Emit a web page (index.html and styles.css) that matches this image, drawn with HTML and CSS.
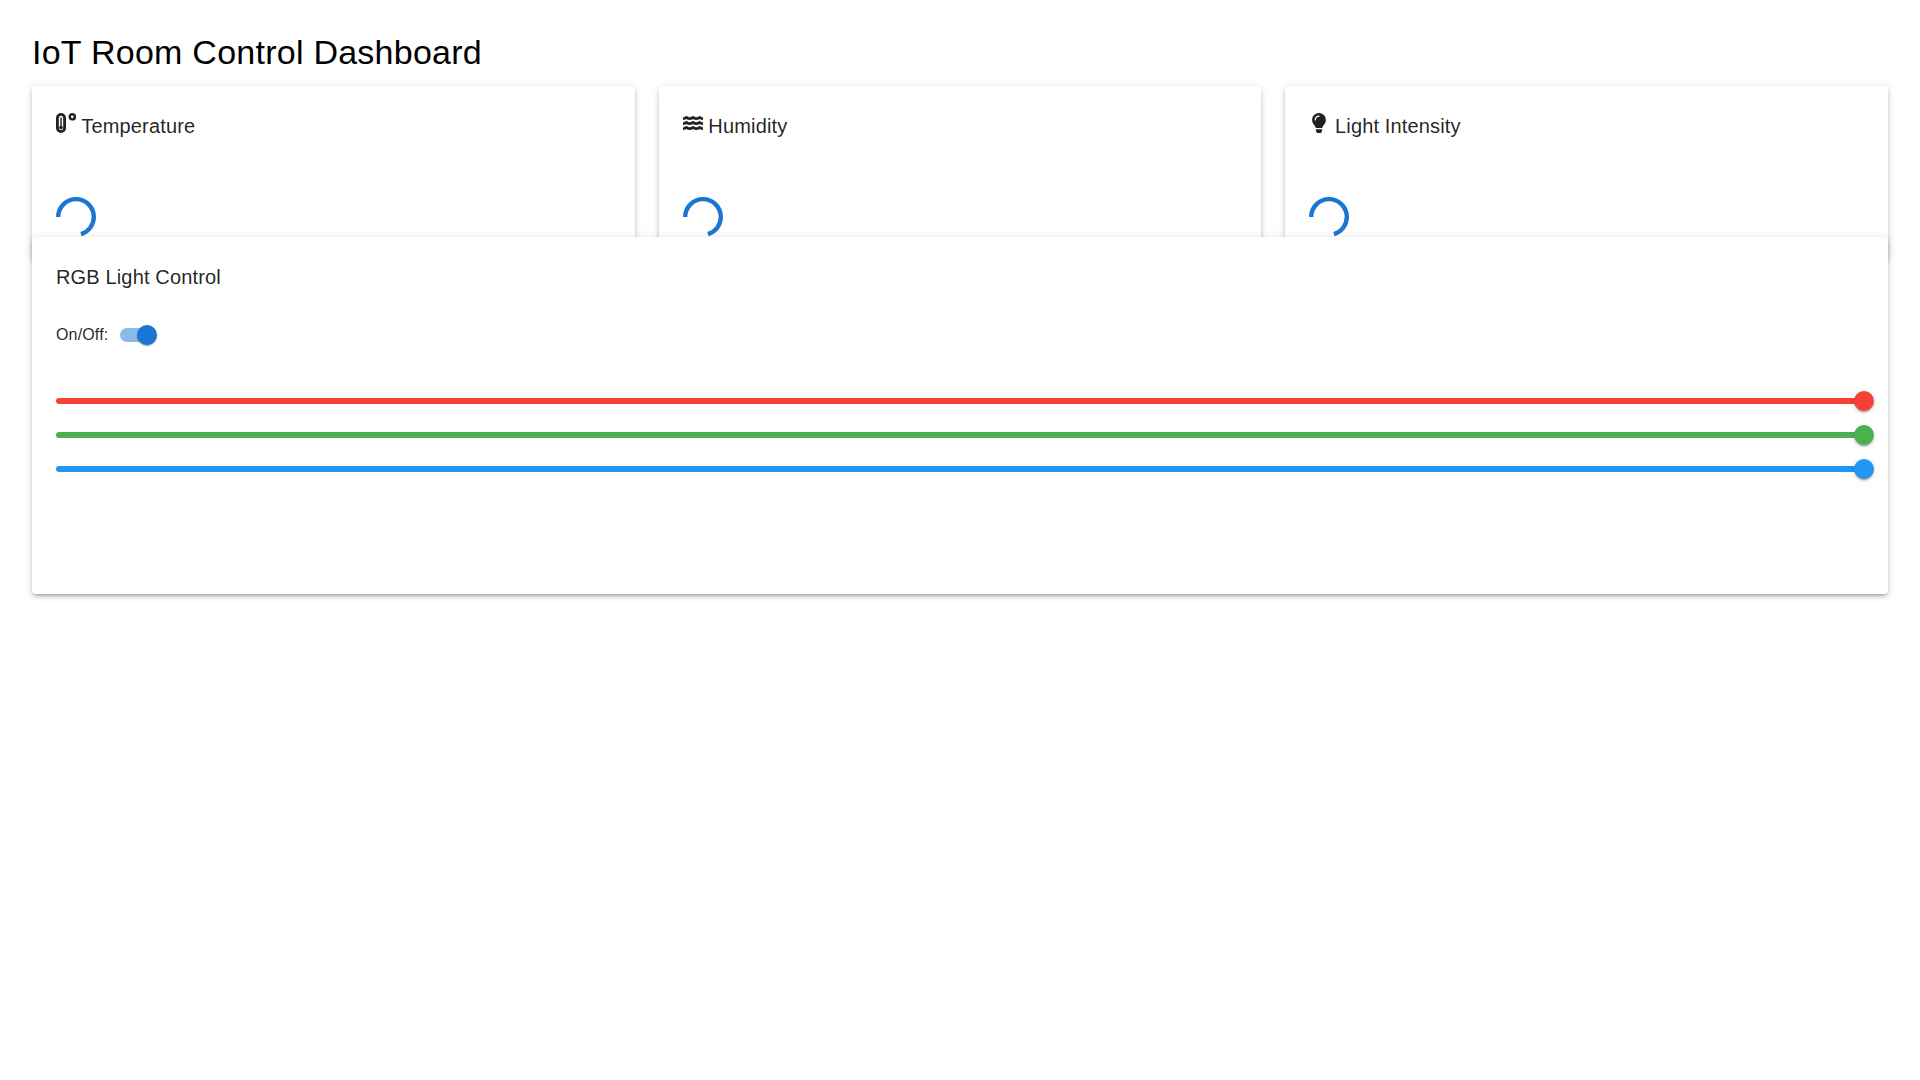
FILE: index.html
```html
<!DOCTYPE html>
<html lang="en">
<head>
    <meta charset="UTF-8">
    <meta name="viewport" content="width=device-width, initial-scale=1.0">
    <title>IoT Room Control Dashboard</title>
    <link rel="stylesheet" href="styles.css">
</head>
<body>
    <div class="dashboard">
        <h1>IoT Room Control Dashboard</h1>

        <div class="sensor-grid">
            <div class="card sensor-card">
                <h2><svg class="card-icon thermo-icon" viewBox="0 0 20 20"><rect x="1.4" y="1.4" width="7.2" height="17.2" rx="3.6"/><path d="M5 4.5v9"/><circle class="thermo-bulb" cx="5" cy="14.6" r="1.8"/><circle class="thermo-degree" cx="16.3" cy="3.8" r="2.6"/></svg> Temperature</h2>
                <svg class="spinner" viewBox="22 22 44 44"><circle cx="44" cy="44" r="19.6" transform="rotate(180 44 44)"/></svg>
            </div>
            <div class="card sensor-card">
                <h2><svg class="card-icon wave-icon" viewBox="0 0 576 512"><path d="M562.1 383.9c-21.5-2.4-42.1-10.5-57.9-22.9-14.1-11.1-34.2-11.3-48.2 0-37.9 30.4-107.2 30.4-145.7-1.5-13.5-11.2-33-9.1-46.7 1.8-38 30.1-106.9 30-145.2-1.7-13.5-11.2-33.3-8.9-47.1 2-15.5 12.2-36 20.1-57.7 22.4-7.9.8-13.6 7.9-13.6 15.7v32.2c0 9.1 7.6 16.8 16.7 16 28.8-2.5 56.1-11.4 79.4-25.9 56.5 34.6 137 34.1 192 0 56.5 34.6 137 34.1 192 0 23.3 14.2 50.9 23.3 79.1 25.8 9.1.8 16.7-6.9 16.7-16v-31.6c.1-8-5.7-15.4-13.8-16.3zm0-144c-21.5-2.4-42.1-10.5-57.9-22.9-14.1-11.1-34.2-11.3-48.2 0-37.9 30.4-107.2 30.4-145.7-1.5-13.5-11.2-33-9.1-46.7 1.8-38 30.1-106.9 30-145.2-1.7-13.5-11.2-33.3-8.9-47.1 2-15.5 12.2-36 20.1-57.7 22.4-7.9.8-13.6 7.9-13.6 15.7v32.2c0 9.1 7.6 16.8 16.7 16 28.8-2.5 56.1-11.4 79.4-25.9 56.5 34.6 137 34.1 192 0 56.5 34.6 137 34.1 192 0 23.3 14.2 50.9 23.3 79.1 25.8 9.1.8 16.7-6.9 16.7-16v-31.6c.1-8-5.7-15.4-13.8-16.3zm0-144C540.6 93.4 520 85.4 504.2 73 490.1 61.9 470 61.7 456 73c-37.9 30.4-107.2 30.4-145.7-1.5-13.5-11.2-33-9.1-46.7 1.8-38 30.1-106.9 30-145.2-1.7-13.5-11.2-33.3-8.9-47.1 2-15.5 12.2-36 20.1-57.7 22.4-7.9.8-13.6 7.9-13.6 15.7v32.2c0 9.1 7.6 16.8 16.7 16 28.8-2.5 56.1-11.4 79.4-25.9 56.5 34.6 137 34.1 192 0 56.5 34.6 137 34.1 192 0 23.3 14.2 50.9 23.3 79.1 25.8 9.1.8 16.7-6.9 16.7-16v-31.6c.1-8-5.7-15.4-13.8-16.3z"/></svg> Humidity</h2>
                <svg class="spinner" viewBox="22 22 44 44"><circle cx="44" cy="44" r="19.6" transform="rotate(180 44 44)"/></svg>
            </div>
            <div class="card sensor-card">
                <h2><svg class="card-icon" viewBox="0 0 352 512"><path d="M96.06 454.35c.01 6.29 1.87 12.45 5.36 17.69l17.09 25.69a31.99 31.99 0 0 0 26.64 14.28h61.71a31.99 31.99 0 0 0 26.64-14.28l17.09-25.69a31.989 31.989 0 0 0 5.36-17.69l.04-38.35H96.01l.05 38.35zM0 176c0 44.37 16.45 84.85 43.56 115.78 16.52 18.85 42.36 58.23 52.21 91.45.04.26.07.52.11.78h160.24c.04-.26.07-.51.11-.78 9.85-33.22 35.69-72.6 52.21-91.45C335.55 260.85 352 220.37 352 176 352 78.61 272.91-.3 175.45 0 73.44.31 0 82.97 0 176zm176-80c-44.11 0-80 35.89-80 80 0 8.84-7.16 16-16 16s-16-7.16-16-16c0-61.76 50.24-112 112-112 8.84 0 16 7.16 16 16s-7.16 16-16 16z"/></svg> Light Intensity</h2>
                <svg class="spinner" viewBox="22 22 44 44"><circle cx="44" cy="44" r="19.6" transform="rotate(180 44 44)"/></svg>
            </div>
        </div>

        <div class="card rgb-panel">
            <h2>RGB Light Control</h2>
            <div class="switch-row">
                <span>On/Off:</span>
                <div class="switch">
                    <div class="switch-track"></div>
                    <div class="switch-thumb"></div>
                </div>
            </div>
            <div class="sliders">
                <div class="slider red"><div class="slider-thumb"></div></div>
                <div class="slider green"><div class="slider-thumb"></div></div>
                <div class="slider blue"><div class="slider-thumb"></div></div>
            </div>
        </div>
    </div>
</body>
</html>
```

FILE: styles.css
```css
body {
    font-family: "Liberation Sans", Arial, sans-serif;
    background-color: #fff;
    margin: 0;
    min-height: 100vh;
}

.dashboard {
    padding: 31px 32px 0;
}

h1 {
    font-size: 34px;
    font-weight: 400;
    line-height: 42px;
    letter-spacing: 0.25px;
    color: #000;
    margin: 0 0 13px;
}

h2 {
    font-size: 20px;
    font-weight: 400;
    line-height: 32px;
    letter-spacing: 0.15px;
    color: rgba(0, 0, 0, 0.87);
    margin: 0;
}

.card {
    background-color: #fff;
    border-radius: 4px;
    padding: 24px;
    box-shadow: 0 3px 3px -2px rgba(0, 0, 0, 0.2), 0 3px 4px 0 rgba(0, 0, 0, 0.14), 0 1px 8px 0 rgba(0, 0, 0, 0.12);
}

.sensor-grid {
    display: grid;
    grid-template-columns: repeat(3, 1fr);
    gap: 24px;
}

.sensor-card {
    height: 175px;
    box-sizing: border-box;
}

.card-icon {
    width: 20px;
    height: 20px;
    fill: rgba(0, 0, 0, 0.87);
}

.thermo-icon {
    fill: none;
    stroke: #222;
    stroke-width: 2.8;
}

.thermo-icon path {
    stroke-width: 1.4;
}

.thermo-icon .thermo-bulb {
    fill: #222;
    stroke: none;
}

.thermo-icon .thermo-degree {
    stroke-width: 2.4;
}

.wave-icon {
    stroke: rgba(0, 0, 0, 0.87);
    stroke-width: 16;
}

.spinner {
    display: block;
    width: 40px;
    height: 40px;
    margin-top: 55px;
}

.spinner circle {
    fill: none;
    stroke: #1976d2;
    stroke-width: 4.8;
    stroke-dasharray: 86.2 200;
}

/* overlaps the bottom of the sensor cards */
.rgb-panel {
    position: relative;
    height: 357px;
    box-sizing: border-box;
    margin-top: -24px;
}

.switch-row {
    display: flex;
    align-items: center;
    font-size: 16px;
    line-height: 24px;
    letter-spacing: 0.15px;
    color: rgba(0, 0, 0, 0.87);
    margin-top: 23px;
}

.switch-row span {
    width: 52px;
}

.switch {
    position: relative;
    width: 58px;
    height: 38px;
}

.switch-track {
    position: absolute;
    left: 12px;
    top: 12px;
    width: 34px;
    height: 14px;
    border-radius: 7px;
    background-color: #1976d2;
    opacity: 0.5;
}

.switch-thumb {
    position: absolute;
    left: 29px;
    top: 9px;
    width: 20px;
    height: 20px;
    border-radius: 50%;
    background-color: #1976d2;
    box-shadow: 0 2px 1px -1px rgba(0, 0, 0, 0.2), 0 1px 1px 0 rgba(0, 0, 0, 0.14), 0 1px 3px 0 rgba(0, 0, 0, 0.12);
}

.sliders {
    display: flex;
    flex-direction: column;
    gap: 28px;
    margin-top: 44px;
}

.slider {
    position: relative;
    height: 6px;
    border-radius: 3px;
}

.slider.red { background-color: #f44336; }
.slider.green { background-color: #4caf50; }
.slider.blue { background-color: #2196f3; }

.slider-thumb {
    position: absolute;
    right: -10px;
    top: -7px;
    width: 20px;
    height: 20px;
    border-radius: 50%;
    background-color: inherit;
    box-shadow: 0 3px 1px -2px rgba(0, 0, 0, 0.2), 0 2px 2px 0 rgba(0, 0, 0, 0.14), 0 1px 5px 0 rgba(0, 0, 0, 0.12);
}
```
